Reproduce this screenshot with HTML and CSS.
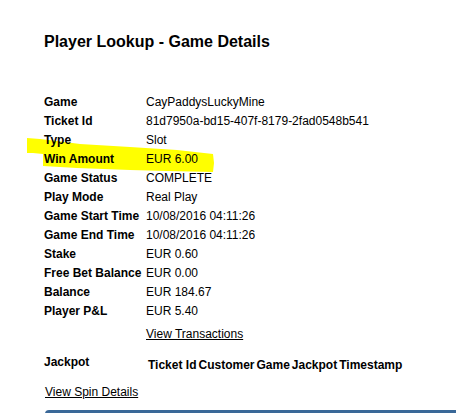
FILE: index.html
```html
<!DOCTYPE html>
<html lang="en">
<head>
    <meta charset="UTF-8">
    <title>Player Lookup - Game Details</title>
    <link rel="stylesheet" href="styles.css">
</head>
<body>
    <svg class="marker" width="190" height="40" viewBox="0 0 190 40">
        <polygon points="0,1 13,2 30,4 53,7 103,10 150,13 186,17 187,26 186,35 140,34 103,33 50,31 16,29 16,17 6,16 0,16" fill="#ffff00"/>
    </svg>

    <div class="page">
        <h1>Player Lookup - Game Details</h1>

        <table class="details">
            <tr><th>Game</th><td>CayPaddysLuckyMine</td></tr>
            <tr><th>Ticket Id</th><td>81d7950a-bd15-407f-8179-2fad0548b541</td></tr>
            <tr><th>Type</th><td>Slot</td></tr>
            <tr><th>Win Amount</th><td>EUR 6.00</td></tr>
            <tr><th>Game Status</th><td>COMPLETE</td></tr>
            <tr><th>Play Mode</th><td>Real Play</td></tr>
            <tr><th>Game Start Time</th><td>10/08/2016 04:11:26</td></tr>
            <tr><th>Game End Time</th><td>10/08/2016 04:11:26</td></tr>
            <tr><th>Stake</th><td>EUR 0.60</td></tr>
            <tr><th>Free Bet Balance</th><td>EUR 0.00</td></tr>
            <tr><th>Balance</th><td>EUR 184.67</td></tr>
            <tr><th>Player P&amp;L</th><td>EUR 5.40</td></tr>
            <tr class="link-row"><th></th><td><a href="#">View Transactions</a></td></tr>
            <tr class="jackpot-row">
                <th>Jackpot</th>
                <td>
                    <table class="jackpot">
                        <tr>
                            <th>Ticket Id</th>
                            <th>Customer</th>
                            <th>Game</th>
                            <th>Jackpot</th>
                            <th>Timestamp</th>
                        </tr>
                    </table>
                </td>
            </tr>
        </table>

        <a class="spin-link" href="#">View Spin Details</a>

        <div class="panel-bar"></div>
    </div>
</body>
</html>
```

FILE: styles.css
```css
html, body {
    margin: 0;
    padding: 0;
    background: #fff;
    overflow: hidden;
}
body {
    position: relative;
    height: 413px;
    font-family: "Liberation Sans", Arial, sans-serif;
    font-size: 12px;
    color: #000;
}
.marker {
    position: absolute;
    left: 27px;
    top: 137px;
}
.page {
    position: relative;
    padding: 33px 0 0 44px;
}
h1 {
    margin: 0;
    font-size: 16px;
    line-height: 18px;
    font-weight: bold;
}
.details {
    margin-top: 42px;
    border-collapse: collapse;
}
.details th,
.details td {
    padding: 2px 0;
    line-height: 15px;
    text-align: left;
    vertical-align: top;
}
.details > tbody > tr > th {
    width: 102px;
    font-weight: bold;
}
.details a {
    color: #000;
}
.link-row td {
    padding-top: 6px;
}
.jackpot-row th {
    padding-top: 11px;
}
.jackpot {
    margin-top: 12px;
    margin-left: 2px;
    border-collapse: collapse;
}
.jackpot th {
    padding: 0 2px 0 0;
    line-height: 15px;
}
.spin-link {
    display: inline-block;
    margin-top: 10px;
    margin-left: 1px;
    color: #000;
    line-height: 15px;
}
.panel-bar {
    margin-top: 10px;
    margin-left: 1px;
    height: 10px;
    background: #3a6898;
    border-radius: 4px 0 0 0;
}
```
